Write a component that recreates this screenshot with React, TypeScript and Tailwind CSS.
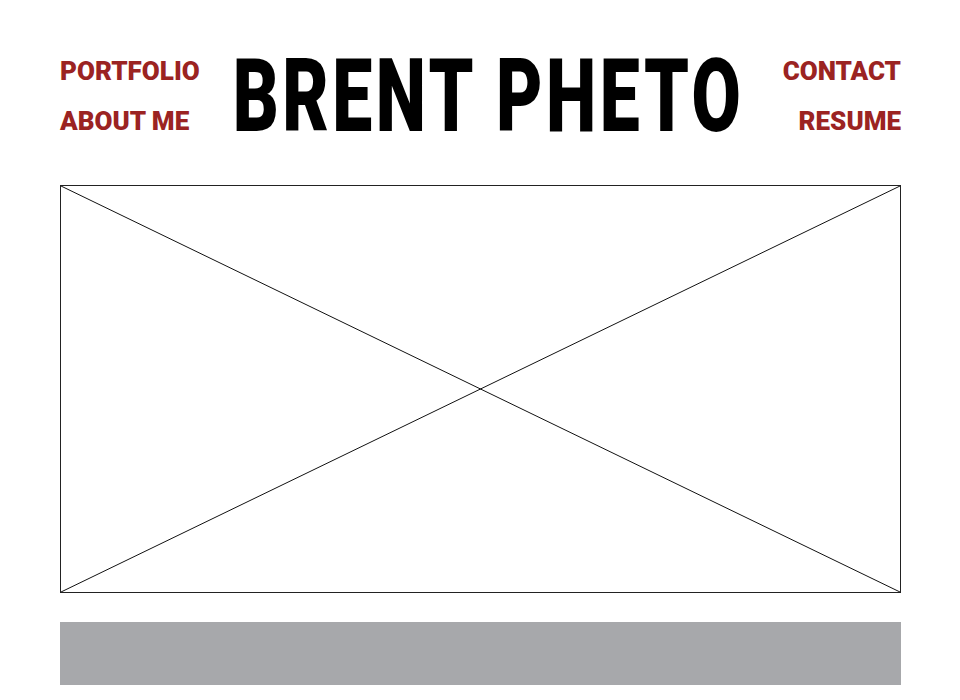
export default function App() {
  return (
    <div className="min-h-[700px] w-full bg-white pl-[60px] pr-[59px] pt-[50px]">
      {/* header */}
      <header className="flex items-center justify-between h-[92px]">
        <nav className="flex w-[176px] flex-col gap-[26px] font-['Roboto',sans-serif] font-black text-[26px] leading-[24px] text-[#9b2322]">
          <a href="#">PORTFOLIO</a>
          <a href="#">ABOUT ME</a>
        </nav>
        <div className="flex w-[504px] justify-center">
          <h1 className="origin-center scale-x-[0.7] whitespace-nowrap font-['Roboto',sans-serif] font-black text-[102px] leading-none tracking-[5px] text-black">
            BRENT PHETO
          </h1>
        </div>
        <nav className="flex w-[160px] flex-col items-end gap-[26px] font-['Roboto',sans-serif] font-black text-[26px] leading-[24px] text-[#9b2322]">
          <a href="#">CONTACT</a>
          <a href="#">RESUME</a>
        </nav>
      </header>

      {/* image placeholder */}
      <div className="relative mt-[43px] h-[408px] border border-[#222]">
        <svg className="absolute inset-0 h-full w-full" viewBox="0 0 100 100" preserveAspectRatio="none">
          <line x1="0" y1="0" x2="100" y2="100" stroke="#111" strokeWidth="1" vectorEffect="non-scaling-stroke" />
          <line x1="100" y1="0" x2="0" y2="100" stroke="#111" strokeWidth="1" vectorEffect="non-scaling-stroke" />
        </svg>
      </div>

      {/* footer bar */}
      <div className="mt-[29px] h-[63px] bg-[#a7a8ab]" />
    </div>
  );
}
